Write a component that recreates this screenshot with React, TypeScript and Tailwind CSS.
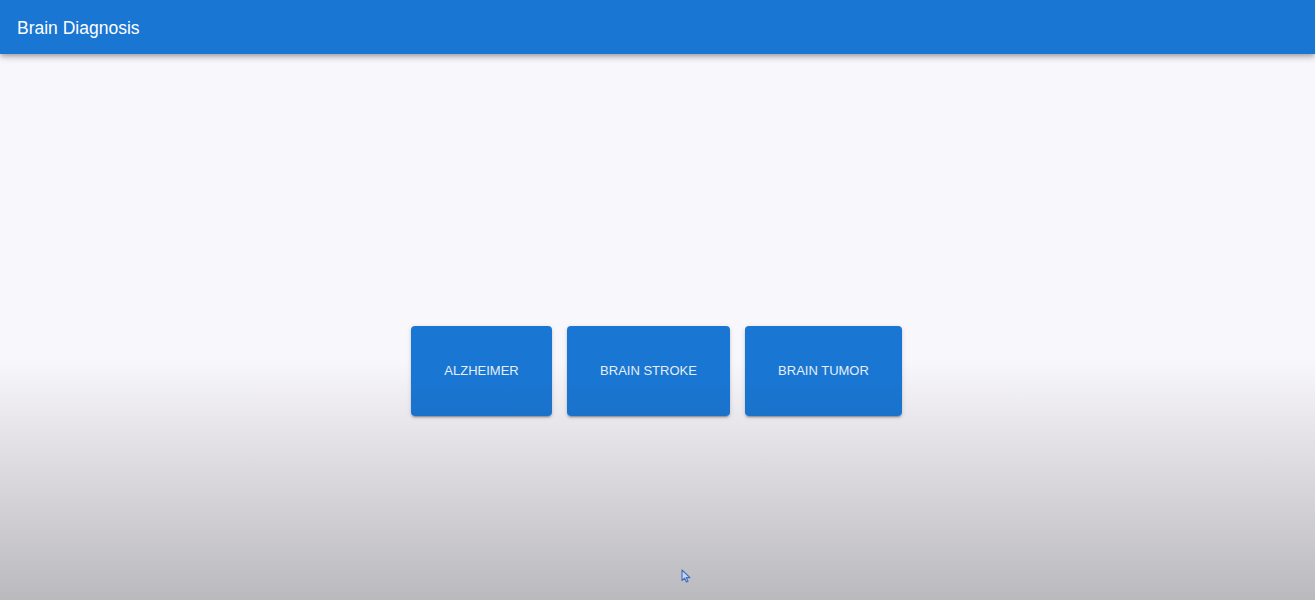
import React from "react";

export default function App() {
  const items = [
    { label: "ALZHEIMER", w: "w-[141px]" },
    { label: "BRAIN STROKE", w: "w-[163px]" },
    { label: "BRAIN TUMOR", w: "w-[157px]" },
  ];
  return (
    <div
      className="relative h-[600px] w-full overflow-hidden bg-[linear-gradient(to_bottom,#f8f7fc_0%,#f8f7fc_60%,#e4e2e7_73%,#bab9bd_100%)]"
      style={{ fontFamily: '"Liberation Sans", Arial, sans-serif' }}
    >
      <header className="relative z-10 flex h-[54px] items-center bg-[#1976d2] px-[17px] pt-[2px] shadow-[0_2px_4px_-1px_rgba(0,0,0,0.2),0_4px_5px_0_rgba(0,0,0,0.14),0_1px_10px_0_rgba(0,0,0,0.12)]">
        <h1 className="text-[17.5px] font-normal text-white">Brain Diagnosis</h1>
      </header>
      <main className="flex justify-center gap-[15px] pr-[2px] pt-[272px]">
        {items.map((it) => (
          <button
            key={it.label}
            className={`${it.w} flex h-[90px] items-center justify-center rounded-[4px] bg-[linear-gradient(to_bottom,#1976d2_0%,#1976d2_60%,#1a72ca_100%)] text-[13px] text-[#e6eef8] shadow-[0_3px_1px_-2px_rgba(0,0,0,0.2),0_2px_2px_0_rgba(0,0,0,0.14),0_1px_5px_0_rgba(0,0,0,0.12)]`}
          >
            {it.label}
          </button>
        ))}
      </main>
      <svg
        className="absolute left-[681px] top-[569px]"
        width="11"
        height="14"
        viewBox="0 0 11 14"
      >
        <path
          d="M1 1 L1 11.5 L3.6 9.2 L5.4 13 L7 12.3 L5.3 8.6 L9 8.6 Z"
          fill="#c9d3e6"
          stroke="#3f6fc4"
          strokeWidth="1.1"
          strokeLinejoin="round"
        />
      </svg>
    </div>
  );
}
